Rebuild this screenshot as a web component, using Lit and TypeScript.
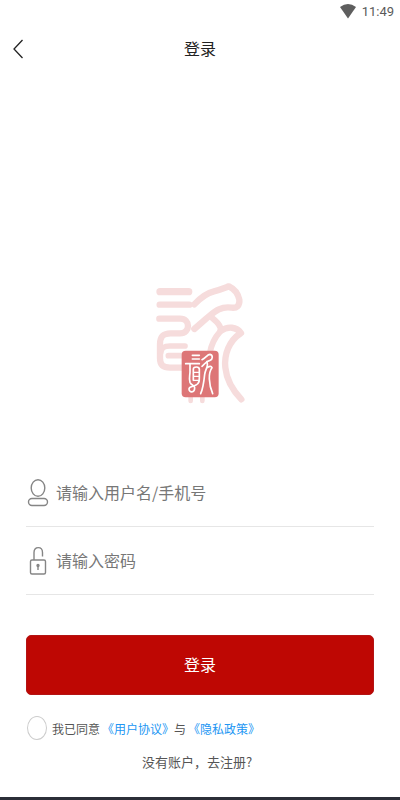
import { LitElement, html, css } from "lit";
import { customElement } from "lit/decorators.js";

@customElement("app-root")
export class AppRoot extends LitElement {
  static styles = css`
    :host {
      display: flex;
      flex-direction: column;
      box-sizing: border-box;
      min-height: 100vh;
      background: #fff;
      border-bottom: 3px solid #2b2f38;
      font-family: "Noto Sans CJK SC", sans-serif;
      color: #555;
    }
    .status {
      display: flex;
      justify-content: flex-end;
      align-items: center;
      gap: 6px;
      height: 24px;
      padding-right: 6px;
      font: 13px/24px Roboto, sans-serif;
      color: #5a5a5a;
    }
    .nav {
      display: grid;
      grid-template-columns: 40px 1fr 40px;
      align-items: center;
      height: 48px;
    }
    .back {
      display: flex;
      padding: 2px 0 0 12px;
      border: 0;
      background: none;
    }
    h1 {
      margin: 0;
      font-size: 16px;
      font-weight: 400;
      line-height: 24px;
      text-align: center;
      color: #222;
    }
    .brand {
      display: flex;
      flex: 1;
      justify-content: center;
      align-items: flex-end;
      padding-bottom: 48px;
    }
    form {
      display: flex;
      flex-direction: column;
      padding: 0 26px 24px;
    }
    .field {
      display: flex;
      align-items: center;
      gap: 6px;
      height: 67px;
      border-bottom: 1px solid #e6e6e6;
    }
    .field svg {
      flex: none;
    }
    .field input {
      flex: 1;
      min-width: 0;
      height: 32px;
      padding: 0 0 2px;
      box-sizing: border-box;
      border: 0;
      outline: 0;
      background: none;
      font: inherit;
      font-size: 16px;
      color: #333;
    }
    .field input::placeholder {
      color: #777;
      opacity: 1;
    }
    .submit {
      height: 60px;
      margin-top: 40px;
      padding: 0 0 2px;
      border: 1px solid #b31414;
      border-radius: 5px;
      background: #be0703;
      font: inherit;
      font-size: 16px;
      color: #fff;
    }
    .agree {
      display: flex;
      align-items: center;
      gap: 2px;
      height: 24px;
      margin-top: 21px;
      font-size: 12px;
    }
    .agree input {
      appearance: none;
      width: 20px;
      height: 24px;
      margin: 0 3px 0 1px;
      border: 1px solid #ccc;
      border-radius: 50%;
      background: #fff;
    }
    .agree input:checked {
      background: #be0703;
    }
    .agree a {
      color: #2196f3;
      text-decoration: none;
    }
    .agree a:first-of-type {
      margin-right: -2px;
    }
    .register {
      align-self: center;
      margin-top: 11px;
      padding-right: 6px;
      font-size: 13px;
      line-height: 22px;
      color: #555;
      text-decoration: none;
    }
  `;

  render() {
    return html`
      <div class="status">
        <svg width="16" height="16" viewBox="0 0 16 16" aria-hidden="true">
          <path d="M0 3Q8-3 16 3L8 14.500Z" fill="#5e5e5e" />
        </svg>
        <span>11:49</span>
      </div>
      <header class="nav">
        <button class="back" type="button" aria-label="返回">
          <svg width="12" height="20" viewBox="0 0 12 20" fill="none" stroke="#222" stroke-width="1.300">
            <path d="M10.500 1L2 10L10.500 19" />
          </svg>
        </button>
        <h1>登录</h1>
      </header>
      <div class="brand">
        <svg width="120" height="140" viewBox="0 0 360 420" fill="none" stroke-linecap="round" stroke-linejoin="round" aria-hidden="true">
          <g stroke="#f6dcdc" stroke-width="19">
            <path d="M60 62H146" stroke-width="22" />
            <path d="M59 101H148" />
            <path d="M58 143H120C152 143 152 187 120 187H92C66 187 60 200 60 220V262C60 284 70 290 90 290H130" />
            <path d="M62 246C64 230 72 225 90 225H135M85 254H130" stroke-width="17" />
            <path d="M163 100C180 82 200 66 222 61C242 56 256 50 267 46C284 54 294 68 298 86C300 104 290 112 275 110C238 104 218 128 202 140L163 174" />
            <path d="M218 142C238 158 246 170 240 182C222 202 214 222 210 244" stroke-width="18" />
            <path d="M242 180C264 164 290 168 303 186C266 210 252 252 256 290C260 330 280 360 304 385" />
            <path d="M152 370V390M187 370V390" stroke-width="14" />
          </g>
          <rect x="125" y="239" width="111" height="140" rx="12" fill="#dd7677" />
          <g stroke="#fff" stroke-width="5">
            <path d="M157 253H178M157 264H178M137 278H178" />
            <path d="M150 280V302C150 314 146 320 150 334C154 344 162 340 164 350C164 366 147 366 147 354C147 346 157 348 168 342C178 338 178 330 178 320V295C178 286 160 286 160 294V328" />
            <path d="M161 304H176M161 316H176M161 328H176" stroke-width="4" />
            <path d="M186 266C198 260 202 250 210 250C220 252 218 266 210 268C198 270 194 280 186 286M200 272C208 282 196 294 194 310C192 330 190 350 182 368M202 290C210 284 214 286 216 290C204 305 206 340 218 368" />
          </g>
        </svg>
      </div>
      <form @submit=${(e: Event) => e.preventDefault()}>
        <label class="field">
          <svg width="24" height="30" viewBox="0 0 24 30" fill="none" stroke="#858585" stroke-width="1.400" aria-hidden="true">
            <ellipse cx="12" cy="10" rx="6.800" ry="8.300" />
            <rect x="2.500" y="20.500" width="19" height="7" rx="3.500" />
          </svg>
          <input type="text" placeholder="请输入用户名/手机号" aria-label="用户名/手机号" />
        </label>
        <label class="field">
          <svg width="24" height="30" viewBox="0 0 24 30" fill="none" stroke="#858585" stroke-width="1.400" aria-hidden="true">
            <rect x="4.500" y="14" width="15" height="14" rx="1.500" />
            <path d="M8 14V6.500C8 0 16.500 0 16.500 6.500V10.500M12 20V24" />
            <circle cx="12" cy="19.500" r="1" fill="#858585" />
          </svg>
          <input type="password" placeholder="请输入密码" aria-label="密码" />
        </label>
        <button class="submit" type="submit">登录</button>
        <div class="agree">
          <input id="agree" type="checkbox" />
          <label for="agree">我已同意</label>
          <a href="#terms">《用户协议》</a>
          <span>与</span>
          <a href="#privacy">《隐私政策》</a>
        </div>
        <a class="register" href="#register">没有账户，去注册?</a>
      </form>
    `;
  }
}
